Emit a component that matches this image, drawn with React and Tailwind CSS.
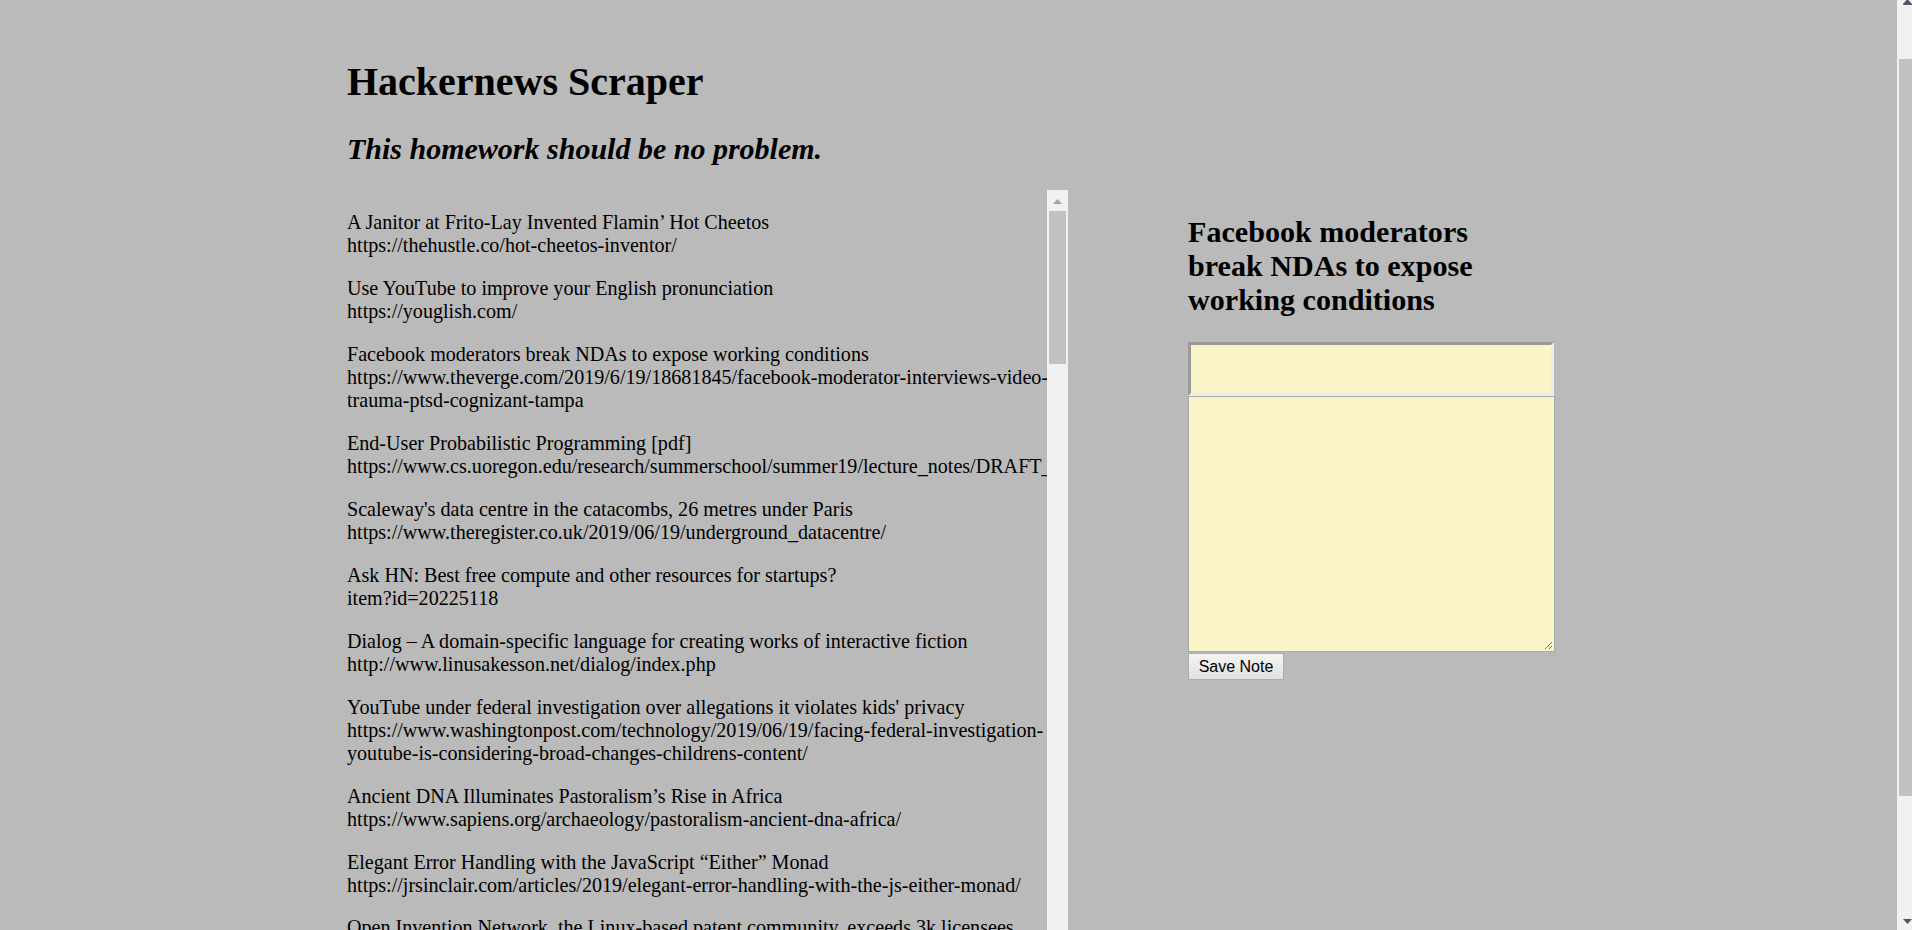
import React from "react";

const items = [
  { title: "A Janitor at Frito-Lay Invented Flamin\u2019 Hot Cheetos", url: ["https://thehustle.co/hot-cheetos-inventor/"] },
  { title: "Use YouTube to improve your English pronunciation", url: ["https://youglish.com/"] },
  {
    title: "Facebook moderators break NDAs to expose working conditions",
    url: ["https://www.theverge.com/2019/6/19/18681845/facebook-moderator-interviews-video-", "trauma-ptsd-cognizant-tampa"],
  },
  { title: "End-User Probabilistic Programming [pdf]", url: ["https://www.cs.uoregon.edu/research/summerschool/summer19/lecture_notes/DRAFT_probprog.pdf"] },
  { title: "Scaleway's data centre in the catacombs, 26 metres under Paris", url: ["https://www.theregister.co.uk/2019/06/19/underground_datacentre/"] },
  { title: "Ask HN: Best free compute and other resources for startups?", url: ["item?id=20225118"] },
  { title: "Dialog \u2013 A domain-specific language for creating works of interactive fiction", url: ["http://www.linusakesson.net/dialog/index.php"] },
  {
    title: "YouTube under federal investigation over allegations it violates kids' privacy",
    url: ["https://www.washingtonpost.com/technology/2019/06/19/facing-federal-investigation-", "youtube-is-considering-broad-changes-childrens-content/"],
  },
  { title: "Ancient DNA Illuminates Pastoralism\u2019s Rise in Africa", url: ["https://www.sapiens.org/archaeology/pastoralism-ancient-dna-africa/"] },
  { title: "Elegant Error Handling with the JavaScript \u201cEither\u201d Monad", url: ["https://jrsinclair.com/articles/2019/elegant-error-handling-with-the-js-either-monad/"] },
  { title: "Open Invention Network, the Linux-based patent community, exceeds 3k licensees", url: ["https://www.zdnet.com/article/open-invention-network-exceeds-3k-licensees/"] },
  { title: "Show HN: A static site generator", url: ["https://github.com/"] },
];

export default function App() {
  return (
    <div className="relative h-[930px] w-full overflow-hidden bg-[#bababa] font-['Liberation_Serif','Times_New_Roman',serif] text-black">
      <div className="pl-[347px] pt-[59px]">
        <h1 className="text-[40px] font-bold leading-[45px]">Hackernews Scraper</h1>
        <h2 className="mt-[28px] text-[30px] font-bold italic leading-[34px]">This homework should be no problem.</h2>

        <div className="mt-[24px] flex items-start">
          {/* list with its scrollbar */}
          <div className="flex h-[760px] w-[721px]">
            <div className="w-[700px] overflow-hidden pt-[21px] text-[20.1px] leading-[23.2px]">
              {items.map((it, i) => (
                <div key={i} className="mb-[19.5px] whitespace-nowrap">
                  <div>{it.title}</div>
                  {it.url.map((u, j) => (
                    <div key={j}>{u}</div>
                  ))}
                </div>
              ))}
            </div>
            <div className="relative w-[21px] bg-[#f1f1f1]">
              <svg className="absolute left-[6px] top-[9px]" width="9" height="5" viewBox="0 0 9 5">
                <polygon points="4.5,0 9,5 0,5" fill="#a3a3a3" />
              </svg>
              <div className="absolute left-[2px] top-[21px] h-[153px] w-[17px] bg-[#c1c1c1]" />
            </div>
          </div>

          {/* note panel */}
          <div className="ml-[120px] flex flex-col items-start pt-[25px]">
            <h2 className="text-[30.1px] font-bold leading-[34.1px]">
              <span className="block">Facebook moderators</span>
              <span className="block">break NDAs to expose</span>
              <span className="block">working conditions</span>
            </h2>
            <input
              type="text"
              className="mt-[25px] box-border h-[54px] w-[366px] border-[3px] border-b-[#ececec] border-l-[#9a9a9a] border-r-[#ececec] border-t-[#9a9a9a] bg-[#fbf4c9] outline-none"
            />
            <div className="relative">
              <textarea className="box-border block h-[256px] w-[367px] resize-none border border-[#a9a9a9] bg-[#fbf4c9] outline-none" />
              <svg className="pointer-events-none absolute bottom-[2px] right-[2px]" width="10" height="10" viewBox="0 0 10 10">
                <line x1="9" y1="2" x2="2" y2="9" stroke="#7a7a7a" strokeWidth="1" />
                <line x1="9" y1="6" x2="6" y2="9" stroke="#7a7a7a" strokeWidth="1" />
              </svg>
            </div>
            <button className="mt-px box-border h-[27px] w-[96px] border border-[#adadad] bg-gradient-to-b from-[#f4f4f4] to-[#dfe1e1] font-['Liberation_Sans',Arial,sans-serif] text-[16px] leading-none text-black">
              Save Note
            </button>
          </div>
        </div>
      </div>

      {/* page scrollbar (overlay) */}
      <div className="absolute right-0 top-0 h-[930px] w-[15px] bg-[#f1f1f1]">
        <svg className="absolute left-[6px] top-0" width="9" height="5" viewBox="0 0 9 5">
          <polygon points="4.5,-1 10,5 -1,5" fill="#4f5669" />
        </svg>
        <div className="absolute left-[2px] top-[59px] h-[737px] w-[13px] bg-[#c1c1c1]" />
        <svg className="absolute left-[6px] top-[919px]" width="9" height="5" viewBox="0 0 9 5">
          <polygon points="0,0 9,0 4.5,5" fill="#4f5669" />
        </svg>
      </div>
    </div>
  );
}
